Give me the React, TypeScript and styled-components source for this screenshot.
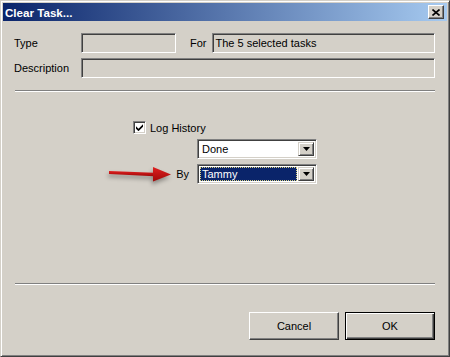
import React from 'react';
import styled, { createGlobalStyle } from 'styled-components';

const GlobalStyle = createGlobalStyle`
  body {
    margin: 0;
    font-family: 'Liberation Sans', Arial, sans-serif;
    font-size: 11px;
    color: #000;
  }
`;

const Window = styled.div`
  box-sizing: border-box;
  width: 450px;
  height: 357px;
  background: #d4d0c8;
  border: 1px solid;
  border-color: #d4d0c8 #404040 #404040 #d4d0c8;
  box-shadow: inset 1px 1px #fff, inset -1px -1px #808080;
  padding: 2px;
  display: flex;
  flex-direction: column;
`;

const TitleBar = styled.div`
  height: 18px;
  display: flex;
  align-items: center;
  justify-content: space-between;
  padding: 0 3px 0 2px;
  background: linear-gradient(to right, #0a246a, #a6caf0);
`;

const Title = styled.span`
  color: #fff;
  font-weight: bold;
  font-size: 11.6px;
`;

const CloseButton = styled.div`
  box-sizing: border-box;
  width: 16px;
  height: 14px;
  background: #d4d0c8;
  border: 1px solid;
  border-color: #fff #404040 #404040 #fff;
  box-shadow: inset -1px -1px #808080;
  display: flex;
  align-items: center;
  justify-content: center;
`;

const Content = styled.div`
  flex: 1;
  display: flex;
  flex-direction: column;
  padding: 12px 12px 14px 11px;
`;

const Row = styled.div`
  display: flex;
  align-items: center;
  height: 20px;
  & + & {
    margin-top: 5px;
  }
`;

const Label = styled.span<{ $width?: number; $gap?: number }>`
  width: ${(p) => (p.$width ? `${p.$width}px` : 'auto')};
  margin-left: ${(p) => p.$gap ?? 0}px;
  margin-right: ${(p) => (p.$width ? 0 : 5)}px;
  white-space: nowrap;
`;

const Field = styled.div<{ $width?: number }>`
  box-sizing: border-box;
  height: 20px;
  ${(p) => (p.$width ? `width: ${p.$width}px;` : 'flex: 1;')}
  border: 1px solid;
  border-color: #808080 #fff #fff #808080;
  box-shadow: inset 1px 1px #404040, inset -1px -1px #d4d0c8;
  background: #d4d0c8;
  padding: 0 3px;
  display: flex;
  align-items: center;
  white-space: nowrap;
`;

const Separator = styled.div<{ $top?: number }>`
  height: 0;
  margin: ${(p) => p.$top ?? 0}px 0 0 1px;
  border-top: 1px solid #808080;
  border-bottom: 1px solid #fff;
`;

const Middle = styled.div`
  flex: 1;
  padding: 29px 0 0 119px;
`;

const Options = styled.div`
  display: grid;
  grid-template-columns: 64px 120px;
  row-gap: 5px;
`;

const CheckRow = styled.label`
  grid-column: 1 / span 2;
  display: flex;
  align-items: center;
  gap: 4px;
  height: 13px;
`;

const CheckBox = styled.span`
  box-sizing: border-box;
  width: 13px;
  height: 13px;
  background: #fff;
  border: 1px solid;
  border-color: #808080 #fff #fff #808080;
  box-shadow: inset 1px 1px #404040, inset -1px -1px #d4d0c8;
  display: flex;
  align-items: center;
  justify-content: center;
`;

const ByCell = styled.div`
  position: relative;
  display: flex;
  align-items: center;
  justify-content: flex-end;
  padding-right: 8px;
`;

const Arrow = styled.svg`
  position: absolute;
  left: -25px;
  top: -2px;
  filter: drop-shadow(-1px 3px 2px rgba(0, 0, 0, 0.35));
`;

const Combo = styled.div`
  box-sizing: border-box;
  grid-column: 2;
  height: 20px;
  border: 1px solid;
  border-color: #808080 #fff #fff #808080;
  box-shadow: inset 1px 1px #404040, inset -1px -1px #d4d0c8;
  background: #fff;
  padding: 2px;
  display: flex;
`;

const ComboText = styled.div<{ $selected?: boolean }>`
  box-sizing: border-box;
  flex: 1;
  display: flex;
  align-items: center;
  padding-left: 1px;
  margin-right: 1px;
  background: ${(p) => (p.$selected ? '#0a246a' : '#fff')};
  color: ${(p) => (p.$selected ? '#fff' : '#000')};
  border: 1px dotted ${(p) => (p.$selected ? '#d8d080' : 'transparent')};
`;

const DropButton = styled.div`
  box-sizing: border-box;
  width: 16px;
  background: #d4d0c8;
  border: 1px solid;
  border-color: #d4d0c8 #404040 #404040 #d4d0c8;
  box-shadow: inset 1px 1px #fff, inset -1px -1px #808080;
  display: flex;
  align-items: center;
  justify-content: center;
`;

const ButtonRow = styled.div`
  display: flex;
  justify-content: flex-end;
  gap: 6px;
  margin-top: 27px;
`;

const Button = styled.button<{ $default?: boolean }>`
  box-sizing: border-box;
  width: 90px;
  height: 28px;
  font-family: inherit;
  font-size: 11px;
  color: #000;
  background: #d4d0c8;
  padding: 0;
  border: 1px solid;
  border-color: ${(p) => (p.$default ? '#000' : '#fff #404040 #404040 #fff')};
  box-shadow: ${(p) =>
    p.$default
      ? 'inset 1px 1px #fff, inset -1px -1px #404040, inset -2px -2px #808080'
      : 'inset -1px -1px #808080'};
`;

const DownTriangle = () => (
  <svg width="7" height="4" viewBox="0 0 7 4">
    <path d="M0 0h7L3.5 4z" fill="#000" />
  </svg>
);

const ComboBox = ({ value, selected }: { value: string; selected?: boolean }) => (
  <Combo>
    <ComboText $selected={selected}>{value}</ComboText>
    <DropButton>
      <DownTriangle />
    </DropButton>
  </Combo>
);

export default function App() {
  return (
    <>
      <GlobalStyle />
      <Window>
        <TitleBar>
          <Title>Clear Task...</Title>
          <CloseButton>
            <svg width="8" height="7" viewBox="0 0 8 7">
              <path d="M0.5 0.5L7.5 6.5M7.5 0.5L0.5 6.5" stroke="#000" strokeWidth="1.6" />
            </svg>
          </CloseButton>
        </TitleBar>
        <Content>
          <Row>
            <Label $width={67}>Type</Label>
            <Field $width={95} />
            <Label $gap={14}>For</Label>
            <Field>The 5 selected tasks</Field>
          </Row>
          <Row>
            <Label $width={67}>Description</Label>
            <Field />
          </Row>
          <Separator $top={12} />
          <Middle>
            <Options>
              <CheckRow>
                <CheckBox>
                  <svg width="7" height="7" viewBox="0 0 7 7">
                    <path d="M0 2.3l2.5 2.5L7 0.3v2.4L2.5 7.2 0 4.7z" fill="#000" />
                  </svg>
                </CheckBox>
                Log History
              </CheckRow>
              <ComboBox value="Done" />
              <ByCell>
                <Arrow width="66" height="24" viewBox="0 0 66 24">
                  <defs>
                    <linearGradient id="arrowRed" x1="0" y1="0" x2="0" y2="1">
                      <stop offset="0" stopColor="#e02020" />
                      <stop offset="1" stopColor="#a00808" />
                    </linearGradient>
                  </defs>
                  <path d="M1 9L46 10.8L46 14.2L1 12z" fill="url(#arrowRed)" />
                  <path d="M45 5L63 12.5L45 19.5z" fill="url(#arrowRed)" />
                </Arrow>
                By
              </ByCell>
              <ComboBox value="Tammy" selected />
            </Options>
          </Middle>
          <Separator />
          <ButtonRow>
            <Button>Cancel</Button>
            <Button $default>OK</Button>
          </ButtonRow>
        </Content>
      </Window>
    </>
  );
}
